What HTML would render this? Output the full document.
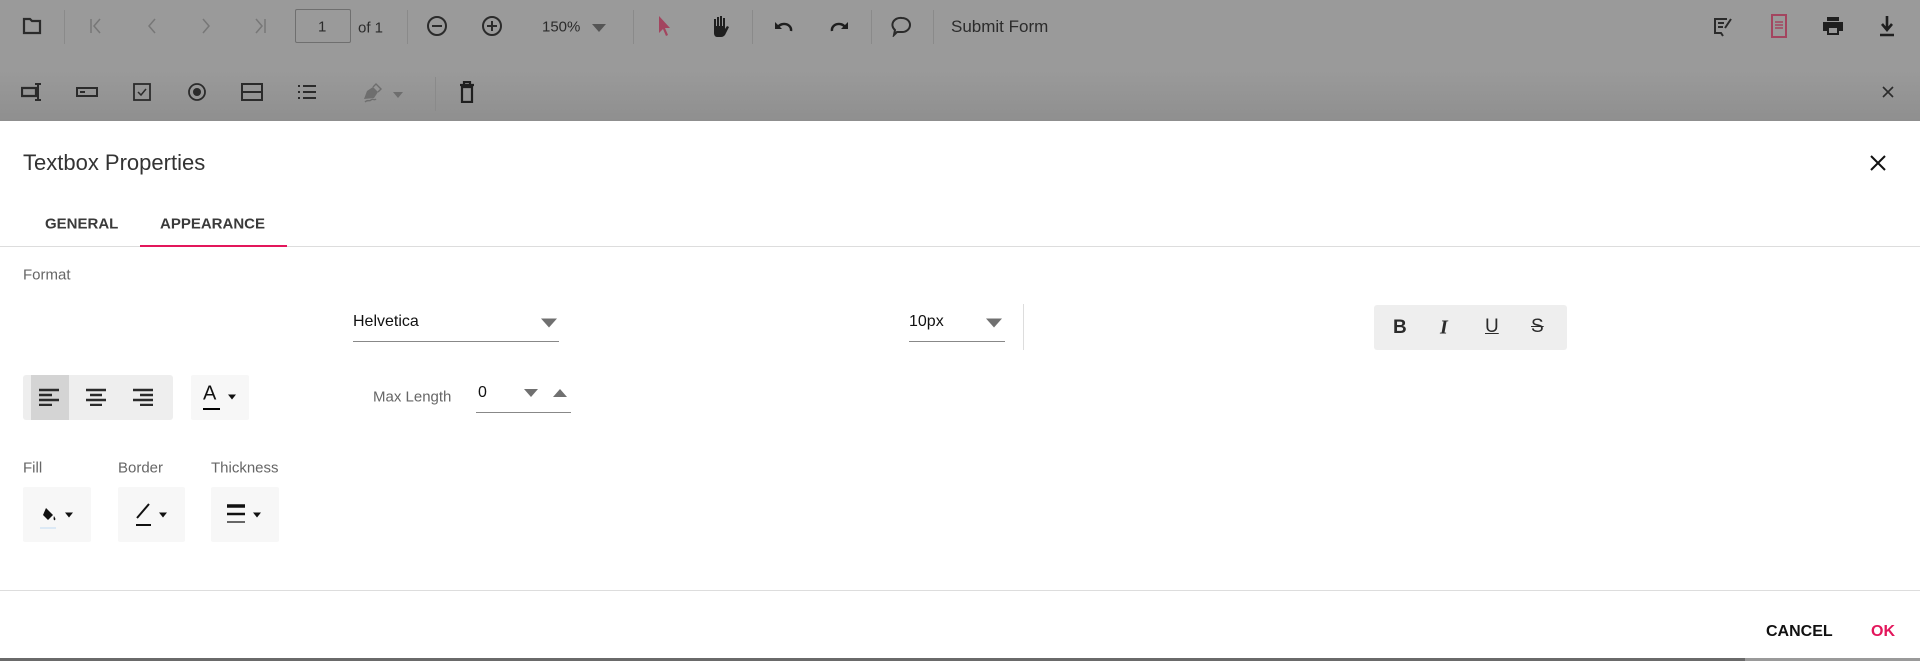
<!DOCTYPE html>
<html><head><meta charset="utf-8"><style>
*{margin:0;padding:0;box-sizing:border-box}
body{width:1920px;height:661px;overflow:hidden;background:#fff;font-family:"Liberation Sans",sans-serif;position:relative}
.a{position:absolute}
.tb{left:0;top:0;width:1920px;height:121px;background:linear-gradient(#9a9a9a 0,#9a9a9a 70px,#8f8f8f 121px)}
.ic{position:absolute;transform:translate(-50%,-50%)}
.sep{position:absolute;width:1px;background:#8a8a8a}
.t{position:absolute;white-space:nowrap;transform:translateY(-50%)}
.btn{position:absolute;background:#f7f7f7;border-radius:2px}
</style></head><body>
<div class="a tb"></div>
<!-- row1 -->
<svg class="ic" style="left:32px;top:26px" width="20" height="20" viewBox="0 0 20 20"><path d="M2 3h6l2 2h8v12H2z" fill="none" stroke="#2b2b2b" stroke-width="2.2"/></svg>
<div class="sep" style="left:64px;top:10px;height:34px"></div>
<svg class="ic" style="left:96px;top:26px" width="16" height="18" viewBox="0 0 16 18"><path d="M3 2v14M12 2L6 9l6 7" fill="none" stroke="#777" stroke-width="1.5"/></svg>
<svg class="ic" style="left:152px;top:26px" width="16" height="18" viewBox="0 0 16 18"><path d="M11 2L5 9l6 7" fill="none" stroke="#777" stroke-width="1.5"/></svg>
<svg class="ic" style="left:206px;top:26px" width="16" height="18" viewBox="0 0 16 18"><path d="M5 2l6 7-6 7" fill="none" stroke="#777" stroke-width="1.5"/></svg>
<svg class="ic" style="left:260px;top:26px" width="16" height="18" viewBox="0 0 16 18"><path d="M13 2v14M4 2l6 7-6 7" fill="none" stroke="#777" stroke-width="1.5"/></svg>
<div class="a" style="left:295px;top:9px;width:56px;height:34px;border:1px solid #6f6f6f;border-radius:2px"></div>
<div class="t" style="left:318px;top:27px;font-size:15px;color:#2b2b2b">1</div>
<div class="t" style="left:358px;top:28px;font-size:15px;color:#2b2b2b">of 1</div>
<div class="sep" style="left:407px;top:10px;height:34px"></div>
<svg class="ic" style="left:437px;top:26px" width="22" height="22" viewBox="0 0 22 22"><circle cx="11" cy="11" r="9" fill="none" stroke="#2b2b2b" stroke-width="2"/><path d="M6 11h10" stroke="#2b2b2b" stroke-width="2"/></svg>
<svg class="ic" style="left:492px;top:26px" width="22" height="22" viewBox="0 0 22 22"><circle cx="11" cy="11" r="9" fill="none" stroke="#2b2b2b" stroke-width="2"/><path d="M6 11h10M11 6v10" stroke="#2b2b2b" stroke-width="2"/></svg>
<div class="t" style="left:542px;top:27px;font-size:15px;color:#2b2b2b">150%</div>
<svg class="ic" style="left:599px;top:28px" width="14" height="8" viewBox="0 0 14 8"><path d="M0 0h14L7 8z" fill="#555"/></svg>
<div class="sep" style="left:633px;top:10px;height:34px"></div>
<svg class="ic" style="left:664px;top:26px" width="14" height="22" viewBox="0 0 14 22"><path d="M2 1v17l4-4 3 7 2-1-3-7h5z" fill="#a3455f"/></svg>
<svg class="ic" style="left:720px;top:26px" width="20" height="22" viewBox="0 0 20 22"><path d="M4 9V4h2v7h1V2h2v9h1V1h2v10h1V3h2v11l2-3 2 1-4 8c-1 1-2 2-4 2H7c-2 0-3-2-3-4z" fill="#1f1f1f"/></svg>
<div class="sep" style="left:752px;top:10px;height:34px"></div>
<svg class="ic" style="left:784px;top:27px" width="20" height="14" viewBox="0 0 20 14"><path d="M4 7a7 6 0 0113 4" fill="none" stroke="#1f1f1f" stroke-width="2.4"/><path d="M1 2v7h7z" fill="#1f1f1f"/></svg>
<svg class="ic" style="left:839px;top:27px" width="20" height="14" viewBox="0 0 20 14"><path d="M16 7a7 6 0 00-13 4" fill="none" stroke="#1f1f1f" stroke-width="2.4"/><path d="M19 2v7h-7z" fill="#1f1f1f"/></svg>
<div class="sep" style="left:871px;top:10px;height:34px"></div>
<svg class="ic" style="left:902px;top:26px" width="22" height="22" viewBox="0 0 22 22"><path d="M11 3a8 7 0 110 14H6l-3 3 1-5A8 7 0 0111 3z" fill="none" stroke="#2b2b2b" stroke-width="2"/></svg>
<div class="sep" style="left:933px;top:10px;height:34px"></div>
<div class="t" style="left:951px;top:27px;font-size:17px;color:#2b2b2b">Submit Form</div>
<svg class="ic" style="left:1723px;top:26px" width="20" height="22" viewBox="0 0 20 22"><path d="M14 4H2v14h6l2 3M5 8h6M5 12h5" fill="none" stroke="#2b2b2b" stroke-width="2"/><path d="M12 13l6-9" stroke="#2b2b2b" stroke-width="2"/></svg>
<svg class="ic" style="left:1779px;top:26px" width="16" height="24" viewBox="0 0 16 24"><rect x="1" y="1" width="14" height="22" fill="none" stroke="#a3455f" stroke-width="2"/><path d="M4 8h8M4 11h8M4 14h8" stroke="#a3455f" stroke-width="1.5"/></svg>
<svg class="ic" style="left:1833px;top:26px" width="22" height="20" viewBox="0 0 22 20"><path d="M5 1h12v4H5z M1 6h20v9h-4v4H5v-4H1z" fill="#1f1f1f"/><rect x="7" y="12" width="8" height="5" fill="#999"/></svg>
<svg class="ic" style="left:1887px;top:26px" width="16" height="22" viewBox="0 0 16 22"><path d="M8 1v13M3 9l5 6 5-6M1 20h14" fill="none" stroke="#1f1f1f" stroke-width="2.6"/></svg>
<!-- row2 -->
<svg class="ic" style="left:32px;top:92px" width="22" height="20" viewBox="0 0 22 20"><path d="M1 6h14v8H1z" fill="none" stroke="#2b2b2b" stroke-width="2.2"/><path d="M17 2v16M14 2h6M14 18h6" stroke="#2b2b2b" stroke-width="2"/></svg>
<svg class="ic" style="left:87px;top:92px" width="22" height="12" viewBox="0 0 22 12"><rect x="1" y="2" width="20" height="8" fill="none" stroke="#2b2b2b" stroke-width="2"/><path d="M4 6h5" stroke="#2b2b2b" stroke-width="2"/></svg>
<svg class="ic" style="left:142px;top:92px" width="20" height="20" viewBox="0 0 20 20"><rect x="2" y="2" width="16" height="16" fill="none" stroke="#2b2b2b" stroke-width="1.8"/><path d="M6 10l3 3 5-6" fill="none" stroke="#2b2b2b" stroke-width="1.5"/></svg>
<svg class="ic" style="left:197px;top:92px" width="20" height="20" viewBox="0 0 20 20"><circle cx="10" cy="10" r="8" fill="none" stroke="#2b2b2b" stroke-width="1.8"/><circle cx="10" cy="10" r="4" fill="#2b2b2b"/></svg>
<svg class="ic" style="left:252px;top:92px" width="22" height="18" viewBox="0 0 22 18"><rect x="1" y="1" width="20" height="16" fill="none" stroke="#2b2b2b" stroke-width="2"/><path d="M1 9h20" stroke="#2b2b2b" stroke-width="2"/></svg>
<svg class="ic" style="left:307px;top:92px" width="20" height="16" viewBox="0 0 20 16"><path d="M1 2h2M6 2h13M1 8h2M6 8h13M1 14h2M6 14h13" stroke="#2b2b2b" stroke-width="2"/></svg>
<svg class="ic" style="left:372px;top:93px" width="22" height="22" viewBox="0 0 22 22"><path d="M3 17l3-8 6-4 5 5-4 6z" fill="#6e6e6e"/><path d="M12 5l3-3 5 5-3 3M4 20c3-3 4 0 6-2s3 1 5-1" fill="none" stroke="#6e6e6e" stroke-width="1.4"/></svg>
<svg class="ic" style="left:398px;top:95px" width="10" height="6" viewBox="0 0 10 6"><path d="M0 0h10L5 6z" fill="#6e6e6e"/></svg>
<div class="sep" style="left:435px;top:77px;height:34px"></div>
<svg class="ic" style="left:467px;top:92px" width="16" height="22" viewBox="0 0 16 22"><path d="M1 4h14M5 4V1h6v3M3 6h10v15H3z" fill="none" stroke="#1f1f1f" stroke-width="2.2"/></svg>
<svg class="ic" style="left:1888px;top:92px" width="14" height="14" viewBox="0 0 14 14"><path d="M2 2l10 10M12 2L2 12" stroke="#2b2b2b" stroke-width="1.6"/></svg>
<!-- dialog -->
<div class="t" style="left:23px;top:163px;font-size:22px;color:#333">Textbox Properties</div>
<svg class="ic" style="left:1878px;top:163px" width="16" height="16" viewBox="0 0 16 16"><path d="M1 1l14 14M15 1L1 15" stroke="#111" stroke-width="2"/></svg>
<div class="t" style="left:45px;top:224px;font-size:15px;font-weight:bold;color:#3a3a3a">GENERAL</div>
<div class="t" style="left:160px;top:224px;font-size:15px;font-weight:bold;color:#3a3a3a">APPEARANCE</div>
<div class="a" style="left:0;top:246px;width:1920px;height:1px;background:#ddd"></div>
<div class="a" style="left:140px;top:245px;width:147px;height:2px;background:#e3165b"></div>
<div class="t" style="left:23px;top:275px;font-size:15px;color:#666">Format</div>
<div class="t" style="left:353px;top:322px;font-size:16px;color:#111">Helvetica</div>
<svg class="ic" style="left:549px;top:323px" width="16" height="9" viewBox="0 0 16 9"><path d="M0 0h16L8 9z" fill="#707070"/></svg>
<div class="a" style="left:353px;top:341px;width:206px;height:1px;background:#888"></div>
<div class="t" style="left:909px;top:322px;font-size:16px;color:#111">10px</div>
<svg class="ic" style="left:994px;top:323px" width="16" height="9" viewBox="0 0 16 9"><path d="M0 0h16L8 9z" fill="#707070"/></svg>
<div class="a" style="left:909px;top:341px;width:96px;height:1px;background:#888"></div>
<div class="a" style="left:1023px;top:304px;width:1px;height:46px;background:#ddd"></div>
<div class="a" style="left:1374px;top:305px;width:193px;height:45px;background:#eee;border-radius:3px"></div>
<div class="t" style="left:1393px;top:328px;font-size:19px;font-weight:bold;color:#2b2b2b">B</div>
<div class="t" style="left:1440px;top:328px;font-size:20px;font-style:italic;font-family:'Liberation Serif',serif;font-weight:bold;color:#2b2b2b">I</div>
<div class="t" style="left:1485px;top:327px;font-size:19px;text-decoration:underline;color:#2b2b2b">U</div>
<div class="t" style="left:1531px;top:327px;font-size:19px;text-decoration:line-through;color:#2b2b2b">S</div>
<div class="a" style="left:23px;top:375px;width:150px;height:45px;background:#eee;border-radius:3px"></div>
<div class="a" style="left:31px;top:375px;width:38px;height:45px;background:#d4d4d4"></div>
<svg class="ic" style="left:49px;top:397px" width="20" height="18" viewBox="0 0 20 18"><path d="M0 2h20M0 7h13M0 12h20M0 17h13" stroke="#2b2b2b" stroke-width="2.4"/></svg>
<svg class="ic" style="left:96px;top:397px" width="20" height="18" viewBox="0 0 20 18"><path d="M0 2h20M4 7h12M0 12h20M4 17h12" stroke="#2b2b2b" stroke-width="2.4"/></svg>
<svg class="ic" style="left:143px;top:397px" width="20" height="18" viewBox="0 0 20 18"><path d="M0 2h20M7 7h13M0 12h20M7 17h13" stroke="#2b2b2b" stroke-width="2.4"/></svg>
<div class="btn" style="left:191px;top:375px;width:58px;height:45px"></div>
<div class="t" style="left:203px;top:394px;font-size:20px;color:#111">A</div>
<div class="a" style="left:203px;top:408px;width:17px;height:2px;background:#000"></div>
<svg class="ic" style="left:232px;top:397px" width="8" height="5" viewBox="0 0 8 5"><path d="M0 0h8L4 5z" fill="#111"/></svg>
<div class="t" style="left:373px;top:397px;font-size:15px;color:#666">Max Length</div>
<div class="t" style="left:478px;top:393px;font-size:16px;color:#111">0</div>
<svg class="ic" style="left:531px;top:393px" width="14" height="8" viewBox="0 0 14 8"><path d="M0 0h14L7 8z" fill="#707070"/></svg>
<svg class="ic" style="left:560px;top:393px" width="14" height="8" viewBox="0 0 14 8"><path d="M0 8h14L7 0z" fill="#707070"/></svg>
<div class="a" style="left:476px;top:412px;width:95px;height:1px;background:#888"></div>
<div class="t" style="left:23px;top:468px;font-size:15px;color:#666">Fill</div>
<div class="t" style="left:118px;top:468px;font-size:15px;color:#666">Border</div>
<div class="t" style="left:211px;top:468px;font-size:15px;color:#666">Thickness</div>
<div class="btn" style="left:23px;top:487px;width:68px;height:55px"></div>
<svg class="ic" style="left:49px;top:515px" width="16" height="16" viewBox="0 0 16 16"><path d="M5 1l7 7-5 5-5-5z" fill="#111"/><path d="M13 9c1 2 2 3 1 4s-2-1-1-4z" fill="#111"/></svg>
<div class="a" style="left:40px;top:527px;width:16px;height:2px;background:#dce9f5"></div>
<svg class="ic" style="left:69px;top:515px" width="8" height="5" viewBox="0 0 8 5"><path d="M0 0h8L4 5z" fill="#111"/></svg>
<div class="btn" style="left:118px;top:487px;width:67px;height:55px"></div>
<svg class="ic" style="left:143px;top:514px" width="16" height="24" viewBox="0 0 16 24"><path d="M2 16L14 2" stroke="#111" stroke-width="2"/><path d="M1 23h15" stroke="#111" stroke-width="2"/></svg>
<svg class="ic" style="left:163px;top:515px" width="8" height="5" viewBox="0 0 8 5"><path d="M0 0h8L4 5z" fill="#111"/></svg>
<div class="btn" style="left:211px;top:487px;width:68px;height:55px"></div>
<svg class="ic" style="left:236px;top:514px" width="18" height="20" viewBox="0 0 18 20"><path d="M0 2h18" stroke="#111" stroke-width="3.5"/><path d="M0 10h18" stroke="#111" stroke-width="2.5"/><path d="M0 18h18" stroke="#111" stroke-width="1.2"/></svg>
<svg class="ic" style="left:257px;top:515px" width="8" height="5" viewBox="0 0 8 5"><path d="M0 0h8L4 5z" fill="#111"/></svg>
<div class="a" style="left:0;top:590px;width:1920px;height:1px;background:#ddd"></div>
<div class="t" style="left:1766px;top:632px;font-size:16px;font-weight:bold;color:#111">CANCEL</div>
<div class="t" style="left:1871px;top:632px;font-size:16px;font-weight:bold;color:#e3165b">OK</div>
<div class="a" style="left:0;top:658px;width:1745px;height:3px;background:#6a6a6a"></div>
<div class="a" style="left:1745px;top:658px;width:175px;height:3px;background:#9a9a9a"></div>
</body></html>
